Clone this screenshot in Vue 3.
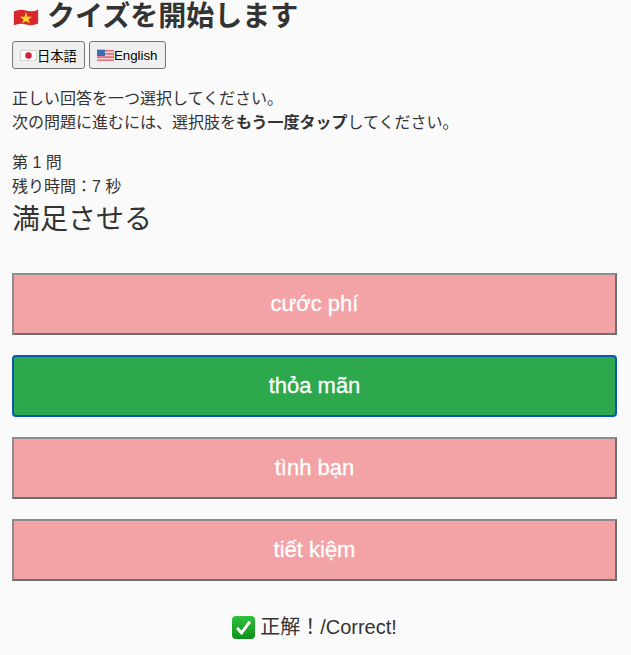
<script setup>
const options = [
  { text: 'cước phí', correct: false },
  { text: 'thỏa mãn', correct: true },
  { text: 'tình bạn', correct: false },
  { text: 'tiết kiệm', correct: false }
]
</script>

<template>
  <main class="page">
    <h1 class="title">
      <svg class="flag-vn" viewBox="0 0 30 20"><path d="M1 3Q8 0 15 2T29 1V17Q22 20 15 18T1 19Z" fill="#d8262c"/><polygon points="15,4 16.8,9 22,9 17.8,12.2 19.4,17 15,14 10.6,17 12.2,12.2 8,9 13.2,9" fill="#ffd52e"/></svg>
      <span>クイズを開始します</span>
    </h1>
    <div class="langs">
      <button class="lang"><svg class="mini" viewBox="0 0 16 12"><path d="M.5 1.5Q4 .5 8 1.2T15.5 1V10.5Q12 11.5 8 10.8T.5 11Z" fill="#fbfbfb" stroke="#c8c8c8" stroke-width=".7"/><circle cx="8" cy="6" r="3" fill="#d0203a"/></svg>日本語</button>
      <button class="lang"><svg class="mini" viewBox="0 0 16 12"><rect y=".5" width="16" height="11" fill="#f3d5d8"/><path d="M0 1.5h16M0 4.5h16M0 7.5h16M0 10.5h16" stroke="#e0707c" stroke-width="1.5"/><rect y=".5" width="7.5" height="6" fill="#3f6cb0"/></svg>English</button>
    </div>
    <p class="intro">正しい回答を一つ選択してください。<br>次の問題に進むには、選択肢を<b>もう一度タップ</b>してください。</p>
    <p class="meta">第 1 問<br>残り時間：7 秒</p>
    <div class="word">満足させる</div>
    <div class="options">
      <button v-for="o in options" :key="o.text" class="opt" :class="{ correct: o.correct }">{{ o.text }}</button>
    </div>
    <p class="result">
      <svg class="check" viewBox="0 0 20 20"><defs><linearGradient id="chk" x1="0" y1="0" x2="0" y2="1"><stop offset="0" stop-color="#2fc23a"/><stop offset="1" stop-color="#0f8f1e"/></linearGradient></defs><rect width="20" height="20" rx="3.5" fill="url(#chk)"/><path d="M4.5 10.5l3.8 4.2L15.5 4.8" fill="none" stroke="#fff" stroke-width="2.6"/></svg>
      <span>正解！/Correct!</span>
    </p>
  </main>
</template>

<style scoped>
.page { box-sizing: border-box; height: 655px; overflow: hidden; padding: 1px 14px 0 12px; background: #fafafa; color: #333; font-family: "Liberation Sans", "Noto Sans CJK JP", sans-serif; }
.title { margin: 0; display: flex; align-items: center; gap: 8px; font-size: 28px; line-height: 32px; font-weight: 700; }
.flag-vn { width: 26px; height: 19px; margin-left: 1px; }
.langs { display: flex; gap: 4px; margin-top: 8px; }
.lang { display: flex; align-items: center; height: 28px; padding: 0 7px; border: 1px solid #767676; border-radius: 3px; background: #efefef; color: #000; font: 13.3px "Liberation Sans", "Noto Sans CJK JP", sans-serif; }
.mini { width: 17px; height: 13px; }
.intro { margin: 18px 0 0; font-size: 16px; line-height: 24px; }
.meta { margin: 16px 0 0; font-size: 16px; line-height: 24px; }
.word { font-size: 28px; line-height: 32px; margin-top: 5px; }
.options { display: flex; flex-direction: column; gap: 20px; margin-top: 37px; }
.opt { height: 62px; border: 2px solid; border-color: #8c8c8c #6e6e6e #6e6e6e #8c8c8c; border-radius: 0; background: #f3a3a5; color: #fff; font: 22px "Liberation Sans", sans-serif; -webkit-text-stroke: 0.3px #fff; }
.opt.correct { background: #2ea84d; border-color: #0b57b5; border-radius: 4px; }
.result { margin: 32px 0 0; display: flex; justify-content: center; align-items: center; gap: 5px; font-size: 20px; line-height: 28px; }
.check { width: 23px; height: 23px; }
</style>
